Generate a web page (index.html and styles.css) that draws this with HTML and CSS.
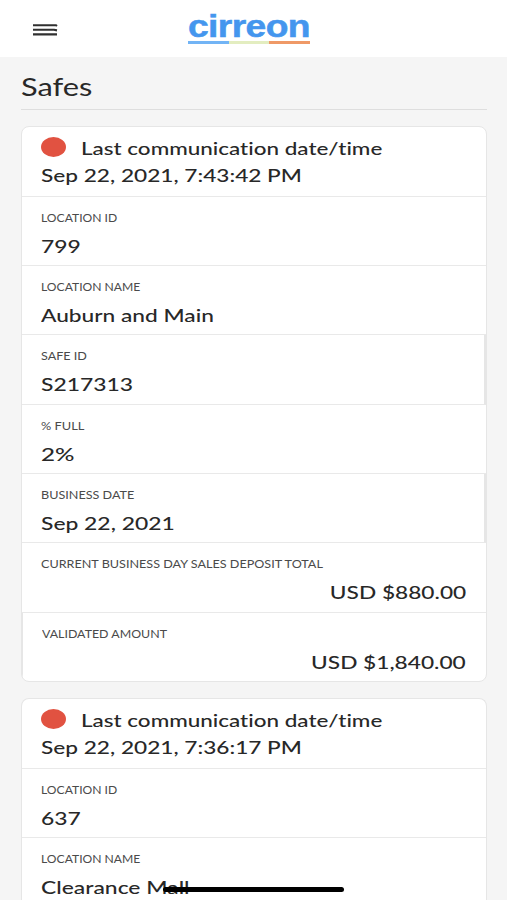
FILE: index.html
```html
<!DOCTYPE html>
<html lang="en">
<head>
<meta charset="utf-8">
<meta name="viewport" content="width=device-width">
<title>Safes</title>
<link rel="stylesheet" href="styles.css">
</head>
<body>
<header class="topbar">
  <svg class="menu" width="26" height="14" viewBox="0 0 26 14"><path d="M1 2.2H24L25 3M1 6.8H22L25 7.4M1 11.4H25" fill="none" stroke="#303030" stroke-width="2.1"/></svg>
  <div class="logo"><div class="logo-name"><span>cirreon</span></div><div class="logo-bar"><i></i><i></i><i></i></div></div>
</header>
<main>
  <h1><span>Safes</span></h1>
  <section class="card">
    <div class="row head"><div class="status"><i class="dot"></i><span class="value last">Last communication date/time</span></div><span class="value stamp">Sep 22, 2021, 7:43:42 PM</span></div>
    <div class="row"><span class="label id">LOCATION ID</span><span class="value num">799</span></div>
    <div class="row"><span class="label name">LOCATION NAME</span><span class="value place">Auburn and Main</span></div>
    <div class="row edge"><span class="label safe">SAFE ID</span><span class="value serial">S217313</span></div>
    <div class="row"><span class="label full">% FULL</span><span class="value percent">2%</span></div>
    <div class="row edge"><span class="label business">BUSINESS DATE</span><span class="value date">Sep 22, 2021</span></div>
    <div class="row tall"><span class="label deposit">CURRENT BUSINESS DAY SALES DEPOSIT TOTAL</span><span class="value money sales">USD $880.00</span></div>
    <div class="row final"><span class="label validated">VALIDATED AMOUNT</span><span class="value money total">USD $1,840.00</span></div>
  </section>
  <section class="card partial">
    <div class="row head"><div class="status"><i class="dot"></i><span class="value last">Last communication date/time</span></div><span class="value stamp">Sep 22, 2021, 7:36:17 PM</span></div>
    <div class="row"><span class="label id">LOCATION ID</span><span class="value num">637</span></div>
    <div class="row cut"><span class="label name">LOCATION NAME</span><span class="value mall">Clearance Mall</span></div>
  </section>
</main>
<div class="home-indicator"></div>
</body>
</html>
```
FILE: styles.css
```css
* { box-sizing: border-box; }
body { margin: 0; height: 900px; overflow: hidden; background: #f5f5f5; color: #282828; font-family: Lato, sans-serif; font-variant-ligatures: none; }
.topbar { height: 57px; background: #fff; display: grid; grid-template-columns: 188px 122px; padding-top: 11px; }
.menu { margin: 12px 0 0 32px; }
.logo-name { height: 30px; font: bold 31px/32px "Liberation Sans", sans-serif; color: #4496ee; white-space: nowrap; -webkit-text-stroke: .5px #4496ee; }
.logo-name span { display: inline-block; transform: scaleX(1.2); transform-origin: left; letter-spacing: -.5px; }
.logo-bar { display: flex; height: 3px; }
.logo-bar i { flex: 1; background: #72b4f5; }
.logo-bar i:nth-child(2) { background: #e3edc0; }
.logo-bar i:nth-child(3) { background: #ef9967; }
main { padding: 0 20px 0 21px; }
h1 { margin: 0 0 16px; height: 53px; border-bottom: 1px solid #dedede; font-size: 25px; font-weight: 400; line-height: 59px; }
h1 span { display: inline-block; transform: scaleX(1.23); transform-origin: left; }
.card { height: 556px; border: 1px solid #e6e6e6; border-radius: 8px; background: #fff; margin-bottom: 16px; overflow: hidden; }
.card.partial { height: 202px; margin-bottom: 0; border-bottom: 0; border-radius: 8px 8px 0 0; }
.row { height: 69.2px; border-bottom: 1px solid #e9e9e9; padding: 13px 20px 0 19px; display: flex; flex-direction: column; align-items: flex-start; }
.row.head { padding-top: 8px; height: 70px; }
.row.edge { border-right: 2px solid #e6e6e6; }
.row.tall { height: 70px; }
.row.final { border-bottom: 0; border-left: 1px solid #e6e6e6; height: 69px; }
.row.cut { height: 61px; border-bottom: 0; }
.row.cut .value { line-height: 25px; height: 25px; padding-top: 1px; }
.status { display: flex; height: 27px; align-items: center; }
.dot { width: 25px; height: 20px; border-radius: 50%; background: #e15241; margin: 0 15px 3px 0; }
.label { font-size: 10.5px; line-height: 16px; height: 23px; color: #4a4a4a; white-space: nowrap; transform: scaleX(1.18); transform-origin: left; }
.label.id, .label.name { transform: scaleX(1.155); }
.label.safe, .label.business, .label.deposit { transform: scaleX(1.2); }
.label.full { transform: scaleX(1.22); }
.value { font-size: 18px; font-weight: 500; line-height: 27px; white-space: nowrap; transform: scaleX(1.27); transform-origin: left; }
.value.last { transform: scaleX(1.247); }
.value.stamp { transform: scaleX(1.258); }
.value.place { transform: scaleX(1.26); }
.value.percent { transform: scaleX(1.34); }
.value.money { align-self: flex-end; transform: scaleX(1.26); transform-origin: right; }
.home-indicator { position: absolute; left: 163px; top: 887px; width: 181px; height: 5px; border-radius: 3px; background: #000; }
```
